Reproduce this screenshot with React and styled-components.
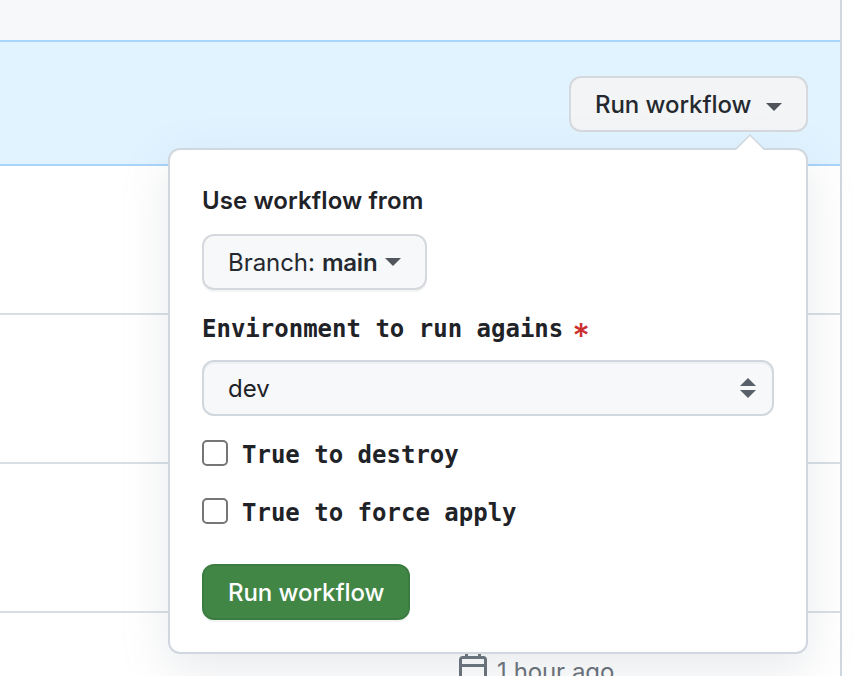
import React from "react";
import styled, { createGlobalStyle } from "styled-components";

const GlobalStyle = createGlobalStyle`
  * { box-sizing: border-box; }
  body {
    margin: 0;
    background: #fff;
    color: #1f2328;
    font: 400 24px/36px Inter, "Liberation Sans", sans-serif;
    overflow: hidden;
  }
`;

const Page = styled.main`
  width: 858px;
  height: 676px;
  overflow: hidden;
`;

const RunsTable = styled.section`
  width: 842px;
  height: 676px;
  border-right: 2px solid #d0d7de;
`;

const TableHeader = styled.header`
  height: 40px;
  background: #f6f8fa;
`;

const DispatchBanner = styled.div`
  display: flex;
  justify-content: flex-end;
  height: 126px;
  padding: 34px 32px 0 0;
  border: solid #a8d3fb;
  border-width: 2px 0;
  background: #e0f3ff;
`;

const MenuAnchor = styled.div`
  position: relative;
  width: 239px;
  height: 56px;
`;

const Button = styled.button`
  display: flex;
  align-items: center;
  width: ${(p) => p.$width}px;
  height: 56px;
  padding: 2px 0 0 24px;
  border: 2px solid ${(p) => (p.$primary ? "#3b7d40" : "#d5d8dc")};
  border-radius: 12px;
  background: ${(p) => (p.$primary ? "#428646" : p.$open ? "#f3f4f6" : "#f6f8fa")};
  color: ${(p) => (p.$primary ? "#fff" : "#24292f")};
  box-shadow: ${(p) => (p.$open ? "none" : "0 2px 0 rgba(27, 31, 36, 0.05)")};
  font: inherit;
  font-weight: ${(p) => p.$weight || 550};
  letter-spacing: ${(p) => p.$tracking || 0}px;
  white-space: nowrap;
`;

const Strong = styled.span`
  margin-left: 7px;
  font-weight: 600;
  letter-spacing: -0.2px;
`;

const Caret = styled.span`
  margin-left: ${(p) => p.$gap}px;
  margin-top: ${(p) => p.$drop || 0}px;
  border: 8px solid transparent;
  border-top-color: ${(p) => p.$color};
  border-bottom: 0;
`;

const Popover = styled.div`
  position: absolute;
  z-index: 2;
  top: 72px;
  right: 0;
  width: 640px;
  height: 506px;
  padding: 33px 32px 32px;
  border: 2px solid #d0d7de;
  border-radius: 12px;
  background: #fff;
  box-shadow: 0 16px 48px rgba(140, 149, 159, 0.2);
`;

const Pointer = styled.svg`
  position: absolute;
  top: -17px;
  right: 40px;
`;

const FieldTitle = styled.div`
  height: 36px;
  margin-bottom: 15px;
  font-weight: 600;
  letter-spacing: 0.1px;
`;

const MonoLabel = styled.span`
  font: 700 24px/36px "DejaVu Sans Mono", monospace;
  white-space: pre;
`;

const InputTitle = styled.div`
  display: flex;
  gap: 9px;
  height: 36px;
  margin: 21px 0 13px;
`;

const Required = styled.span`
  color: #cb2f2f;
  font-size: 34px;
  font-weight: 500;
  line-height: 49px;
`;

const Select = styled.div`
  display: flex;
  align-items: center;
  justify-content: space-between;
  width: 572px;
  height: 56px;
  padding: 0 16px 0 24px;
  border: 2px solid #d0d7de;
  border-radius: 12px;
  background: #f6f8fa;
  box-shadow: inset 0 2px 0 rgba(208, 215, 222, 0.2);
`;

const SelectValue = styled.span`
  padding-top: 2px;
`;

const Option = styled.label`
  display: flex;
  align-items: center;
  gap: 14px;
  height: 36px;
  margin-top: ${(p) => p.$top}px;
`;

const Checkbox = styled.input`
  appearance: none;
  width: 26px;
  height: 26px;
  margin: 0 0 4px;
  border: 2px solid #767676;
  border-radius: 5px;
  background: #fff;
`;

const Submit = styled.div`
  margin-top: 33px;
`;

const Row = styled.div`
  height: ${(p) => p.$height}px;
  border-bottom: 2px solid #d8dee4;
`;

const RunMeta = styled.div`
  display: flex;
  gap: 8px;
  margin: 39px 0 0 457px;
  height: 24px;
  color: #656d76;
  letter-spacing: -0.15px;
  word-spacing: 0.5px;

  svg {
    flex: none;
  }
`;

const MetaText = styled.span`
  margin-top: 2px;
`;

export default function App() {
  return (
    <Page>
      <GlobalStyle />
      <RunsTable>
        <TableHeader />
        <DispatchBanner>
          <MenuAnchor>
            <Button $width={239} $open $tracking={-0.06}>
              Run workflow
              <Caret $gap={15} $drop={3} $color="#505359" />
            </Button>
            <Popover>
              <Pointer width="32" height="18" viewBox="0 0 32 18">
                <path d="M1 18 16 2 31 18Z" fill="#fff" />
                <path d="M2 16 16 2 30 16" fill="none" stroke="#d0d7de" strokeWidth="1.5" />
              </Pointer>
              <FieldTitle>Use workflow from</FieldTitle>
              <Button $width={225} $weight={400} $tracking={-0.05}>
                Branch:
                <Strong>main</Strong>
                <Caret $gap={8} $drop={-2} $color="#50565b" />
              </Button>
              <InputTitle>
                <MonoLabel>Environment to run agains</MonoLabel>
                <Required>*</Required>
              </InputTitle>
              <Select>
                <SelectValue>dev</SelectValue>
                <svg width="16" height="20" viewBox="0 0 16 20" fill="#586069">
                  <path d="M0 8 8 0 16 8ZM0 12 8 20 16 12Z" />
                </svg>
              </Select>
              <Option $top={21}>
                <Checkbox type="checkbox" />
                <MonoLabel>True to destroy</MonoLabel>
              </Option>
              <Option $top={22}>
                <Checkbox type="checkbox" />
                <MonoLabel>True to force apply</MonoLabel>
              </Option>
              <Submit>
                <Button $width={208} $primary $tracking={-0.06}>
                  Run workflow
                </Button>
              </Submit>
            </Popover>
          </MenuAnchor>
        </DispatchBanner>
        <Row $height={149} />
        <Row $height={149} />
        <Row $height={149} />
        <RunMeta>
          <svg width="32" height="32" viewBox="0 0 16 16" fill="currentColor">
            <path
              fillRule="evenodd"
              d="M4.75 0a.75.75 0 01.75.75V2h5V.75a.75.75 0 011.5 0V2h1.25c.966 0 1.75.784 1.75 1.75v10.5A1.75 1.75 0 0113.25 16H2.75A1.75 1.75 0 011 14.25V3.75C1 2.784 1.784 2 2.75 2H4V.75A.75.75 0 014.75 0zm0 3.5h-2a.25.25 0 00-.25.25V6h11V3.75a.25.25 0 00-.25-.25H4.75zM2.5 7.5v6.75c0 .138.112.25.25.25h10.5a.25.25 0 00.25-.25V7.5h-11z"
            />
          </svg>
          <MetaText>1 hour ago</MetaText>
        </RunMeta>
      </RunsTable>
    </Page>
  );
}
